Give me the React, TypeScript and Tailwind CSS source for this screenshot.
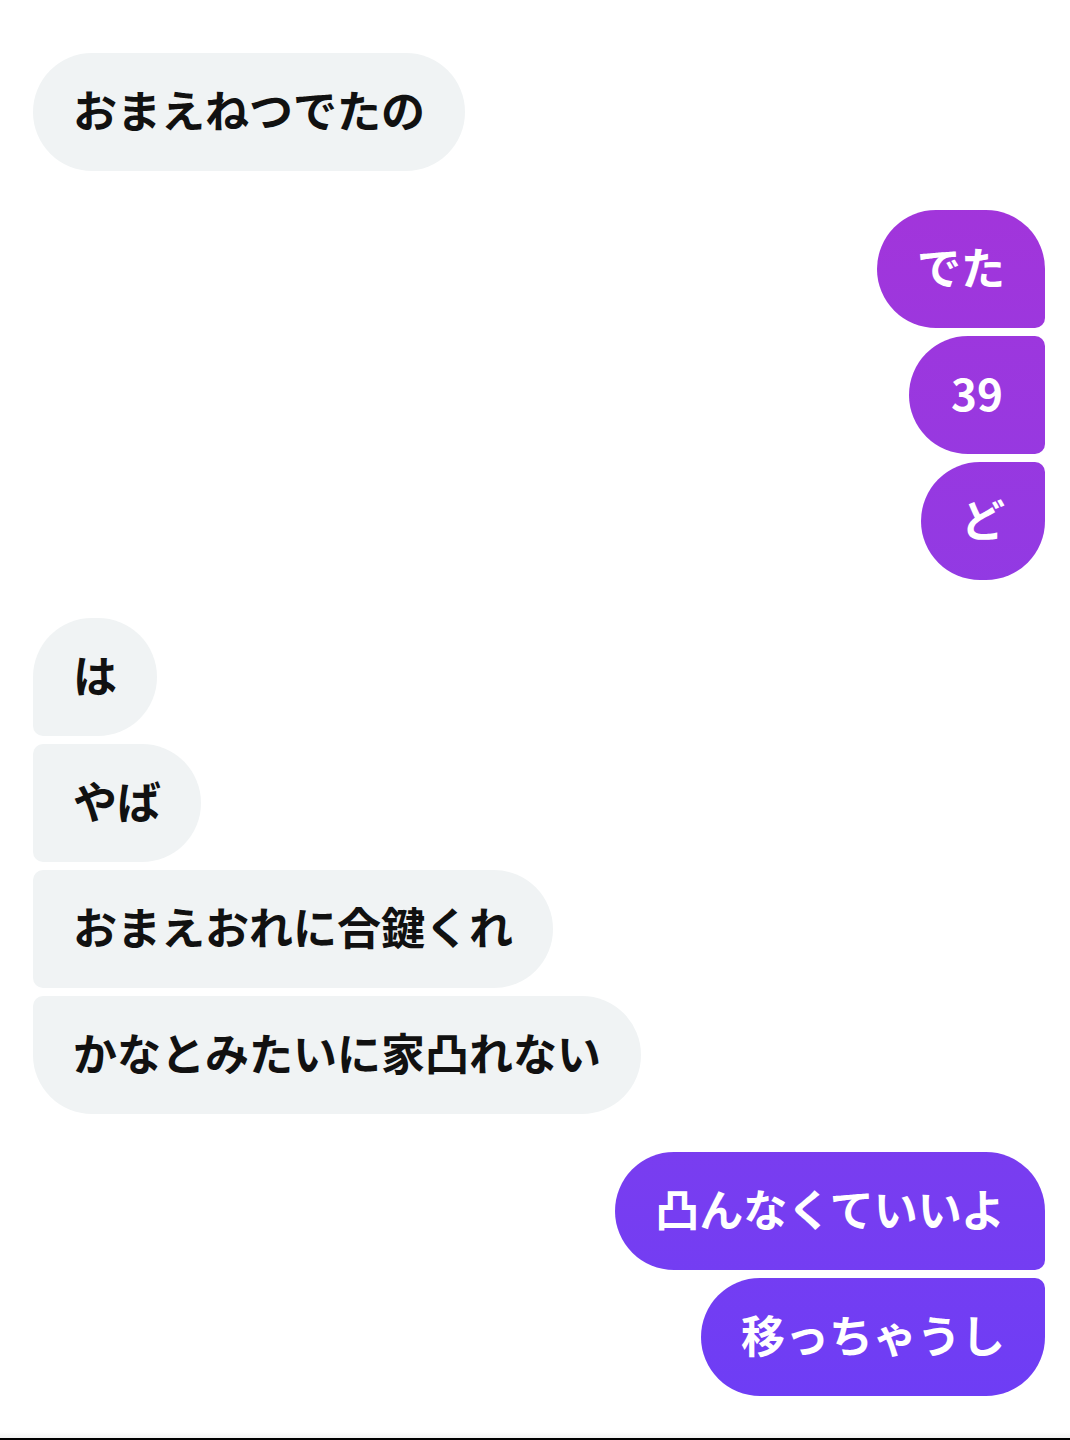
import React from "react";

type Pos = "single" | "first" | "middle" | "last";

const FONT = {
  fontFamily: '"Noto Sans CJK JP", "Noto Sans", sans-serif',
};

function leftRadius(pos: Pos) {
  switch (pos) {
    case "single":
      return "rounded-[59px]";
    case "first":
      return "rounded-tl-[59px] rounded-bl-[10px] rounded-r-[59px]";
    case "middle":
      return "rounded-l-[10px] rounded-r-[59px]";
    case "last":
      return "rounded-tl-[10px] rounded-bl-[59px] rounded-r-[59px]";
  }
}

function rightRadius(pos: Pos) {
  switch (pos) {
    case "single":
      return "rounded-[59px]";
    case "first":
      return "rounded-tr-[59px] rounded-br-[10px] rounded-l-[59px]";
    case "middle":
      return "rounded-r-[10px] rounded-l-[59px]";
    case "last":
      return "rounded-tr-[10px] rounded-br-[59px] rounded-l-[59px]";
  }
}

function Incoming({ text, pos }: { text: string; pos: Pos }) {
  return (
    <div className="flex justify-start">
      <div
        className={`h-[118px] flex items-center px-[40px] pb-[6px] bg-[#f0f3f4] text-[#111111] text-[44px] font-bold leading-none whitespace-nowrap ${leftRadius(pos)}`}
        style={FONT}
      >
        {text}
      </div>
    </div>
  );
}

function Outgoing({ text, pos, wide }: { text: string; pos: Pos; wide?: boolean }) {
  return (
    <div className="flex justify-end">
      <div
        className={`h-[118px] flex items-center ${wide ? "px-[42px]" : "px-[40px]"} pb-[6px] bg-gradient-to-b from-[#aa31d6] to-[#6c3df6] bg-fixed text-white text-[44px] font-bold leading-none whitespace-nowrap ${rightRadius(pos)}`}
        style={FONT}
      >
        {text}
      </div>
    </div>
  );
}

export default function App() {
  return (
    <div className="min-h-[1440px] w-full bg-white flex flex-col">
      <div className="flex flex-col pt-[53px] pl-[33px] pr-[25px]">
        <Incoming text="おまえねつでたの" pos="single" />

        <div className="flex flex-col gap-[8px] mt-[39px]">
          <Outgoing text="でた" pos="first" />
          <Outgoing text="39" pos="middle" wide />
          <Outgoing text="ど" pos="last" />
        </div>

        <div className="flex flex-col gap-[8px] mt-[38px]">
          <Incoming text="は" pos="first" />
          <Incoming text="やば" pos="middle" />
          <Incoming text="おまえおれに合鍵くれ" pos="middle" />
          <Incoming text="かなとみたいに家凸れない" pos="last" />
        </div>

        <div className="flex flex-col gap-[8px] mt-[38px]">
          <Outgoing text="凸んなくていいよ" pos="first" />
          <Outgoing text="移っちゃうし" pos="last" />
        </div>
      </div>
      <div className="mt-auto h-[6px] bg-gradient-to-b from-white to-[#f2f2f2]" />
      <div className="h-[2px] bg-black" />
    </div>
  );
}
